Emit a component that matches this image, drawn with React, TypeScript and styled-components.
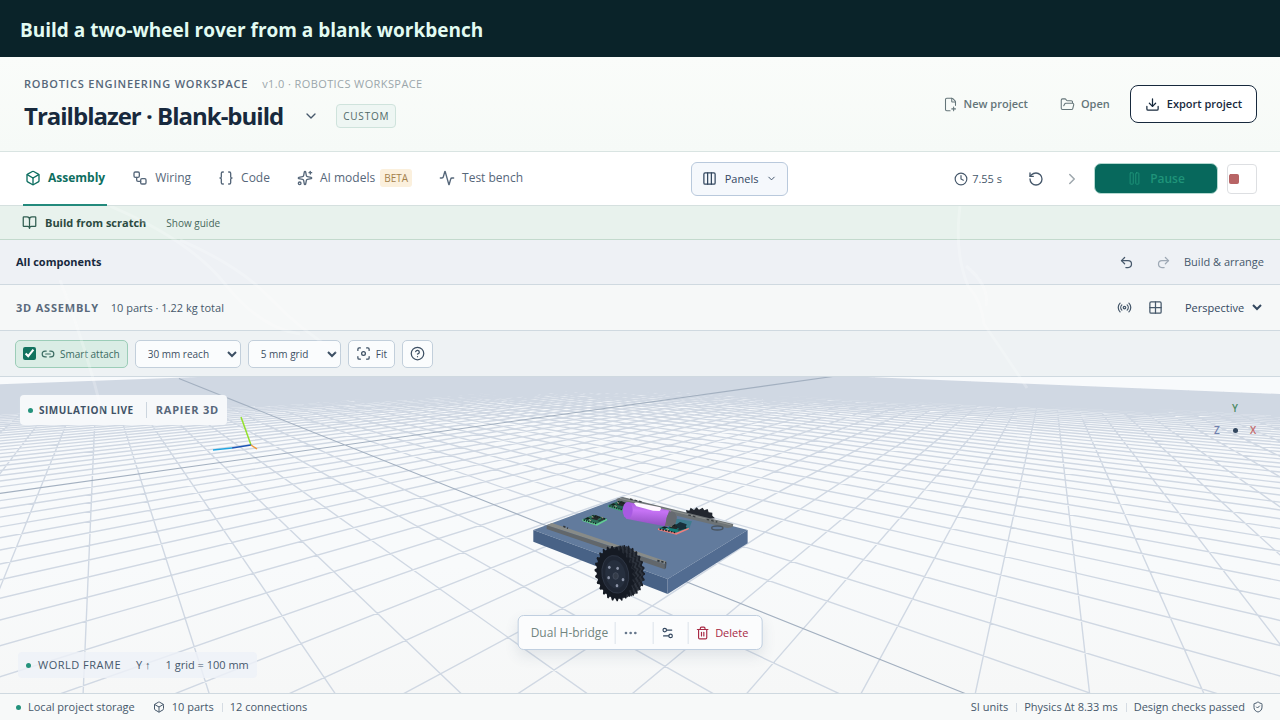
import React from "react";
import styled, { createGlobalStyle, css } from "styled-components";
import {
  Activity, BookOpen, Box, Braces, ChevronDown, ChevronRight, Clock, Columns3, Download,
  Ellipsis, FilePlus2, Focus, FolderOpen, Grid2x2, HelpCircle, Link2, Pause, Radio, Redo2,
  RotateCcw, Settings2, ShieldCheck, Sparkles, Square, Trash2, Undo2, Workflow,
} from "lucide-react";

const GlobalStyle = createGlobalStyle`
  *, *::before, *::after { box-sizing: border-box; }
  body { margin: 0; background: #f6f8f8; }
  button, select, input { font: inherit; color: inherit; }
  button { cursor: pointer; }
`;

const Page = styled.div`
  min-height: 100vh;
  display: flex;
  flex-direction: column;
  font-family: "Open Sans", "Noto Sans", sans-serif;
  font-size: 11px;
  line-height: 16px;
  color: #46586b;
  white-space: nowrap;
`;

const Banner = styled.div`
  padding: 18px 20px 15px;
  background: #0a2329;
  color: #e2fbf2;
  font-size: 19px;
  line-height: 24px;
  font-weight: 700;
`;

const Header = styled.header`
  display: flex;
  align-items: center;
  justify-content: space-between;
  height: 95px;
  padding: 0 23px 0 24px;
  background: linear-gradient(#fafcfa, #f6faf7);
  border-bottom: 1px solid #d9e4e2;
`;

const TitleBlock = styled.div`
  display: flex;
  flex-direction: column;
  gap: 8px;
`;

const Eyebrow = styled.div`
  display: flex;
  gap: 14px;
  line-height: 16px;
  letter-spacing: 0.8px;
  font-weight: 600;
  color: #56677a;
`;

const Version = styled.span`
  font-weight: 400;
  letter-spacing: 0.4px;
  color: #9ba6ab;
`;

const TitleRow = styled.div`
  display: flex;
  align-items: center;
`;

const Title = styled.h1`
  margin: 0;
  font-size: 24px;
  line-height: 32px;
  font-weight: 700;
  letter-spacing: -1px;
  color: #17293d;
`;

const PlainButton = styled.button<{ $pad?: number; $tone?: string }>`
  display: inline-flex;
  align-items: center;
  gap: 6px;
  padding: 4px ${(p) => p.$pad ?? 4}px;
  border: 0;
  background: none;
  color: ${(p) => p.$tone ?? "inherit"};
`;

const ProjectMenu = styled(PlainButton)`
  margin: 0 13px 0 16px;
`;

const Tag = styled.span`
  padding: 3px 6px;
  border: 1px solid #cfe3dc;
  border-radius: 4px;
  background: #eef6f3;
  font-size: 10px;
  letter-spacing: 0.8px;
  font-weight: 500;
  color: #506a68;
`;

const Actions = styled.div`
  display: flex;
  align-items: center;
  gap: 8px;
  font-weight: 600;
`;

const ExportButton = styled.button`
  display: inline-flex;
  align-items: center;
  gap: 7px;
  height: 38px;
  margin-left: 0;
  padding: 0 14px;
  border: 1px solid #17293d;
  border-radius: 8px;
  background: #fff;
  color: #17293d;
  font-weight: 600;
`;

const TabBar = styled.div`
  display: flex;
  align-items: center;
  justify-content: space-between;
  height: 54px;
  padding: 0 23px;
  background: #fff;
  border-bottom: 1px solid #d5e0df;
`;

const Tabs = styled.nav`
  display: flex;
  gap: 23px;
  height: 54px;
`;

const Tab = styled.a<{ $active?: boolean }>`
  display: flex;
  align-items: center;
  gap: 7px;
  padding: 0 2px;
  font-size: 12px;
  text-decoration: none;
  color: #56677a;
  border-bottom: 2px solid transparent;
  ${(p) => p.$active && css`
    color: #0d6e60;
    font-weight: 700;
    border-bottom-color: #238a7c;
  `}
`;

const Beta = styled.span`
  padding: 1px 4px;
  margin-left: -2px;
  border-radius: 3px;
  background: #fbf0dd;
  color: #a3814b;
  font-size: 10px;
`;

const PanelsButton = styled.button`
  display: inline-flex;
  align-items: center;
  gap: 8px;
  height: 34px;
  padding: 0 10px;
  border: 1px solid #b9c9dc;
  border-radius: 6px;
  background: #f5f8fc;
  color: #33475f;
`;

const Transport = styled.div`
  display: flex;
  align-items: center;
`;

const Elapsed = styled.span`
  display: inline-flex;
  align-items: center;
  gap: 4px;
  margin-right: 20px;
`;

const PauseButton = styled.button`
  display: inline-flex;
  align-items: center;
  justify-content: center;
  gap: 8px;
  width: 124px;
  height: 31px;
  margin: 0 9px 0 0;
  border: 1px solid #b5d9d1;
  border-radius: 7px;
  background: #07685c;
  color: #1f9479;
  font-size: 12px;
  font-weight: 600;
`;

const StopButton = styled.button`
  display: flex;
  align-items: center;
  width: 30px;
  height: 30px;
  padding: 0;
  border: 1px solid #dddfe2;
  border-radius: 4px;
  background: #fff;
  color: #b86465;
`;

const Workspace = styled.main`
  position: relative;
  flex: 1;
  display: flex;
  flex-direction: column;
`;

const Sheen = styled.svg`
  position: absolute;
  top: 0;
  left: 0;
  width: 100%;
  height: 220px;
  pointer-events: none;
`;

const Strip = styled.div<{ $bg: string; $line: string; $height: number; $pad?: string }>`
  display: flex;
  align-items: center;
  height: ${(p) => p.$height}px;
  padding: ${(p) => p.$pad ?? "0 16px"};
  background: ${(p) => p.$bg};
  border-bottom: 1px solid ${(p) => p.$line};
`;

const Push = styled.div`
  flex: 1;
`;

const GuideTitle = styled.strong`
  margin: 0 16px 0 8px;
  font-weight: 700;
  color: #2b4a41;
`;

const GuideButton = styled(PlainButton)`
  font-size: 10px;
  font-weight: 500;
  color: #47685c;
`;

const PanelTitle = styled.h2`
  margin: 0;
  font-size: 11px;
  font-weight: 700;
  color: #17293d;
`;

const Caps = styled.strong`
  font-weight: 700;
  letter-spacing: 0.8px;
  color: #5a6a7c;
`;

const Meta = styled.span`
  margin-left: 12px;
`;

const ModeLabel = styled.span`
  margin-left: 2px;
`;

const ViewSelect = styled.select`
  width: 84px;
  margin: 0 -1px 0 10px;
  border: 0;
  background: transparent;
  color: #33475f;
`;

const Tools = styled(Strip)`
  gap: 7px;
  font-size: 10px;
`;

const Toggle = styled.label`
  display: inline-flex;
  align-items: center;
  gap: 5px;
  height: 28px;
  padding: 0 7px;
  border: 1px solid #9ccdb8;
  border-radius: 5px;
  background: #daede5;
  color: #3b6b62;

  input {
    width: 13px;
    height: 13px;
    margin: 0;
    accent-color: #12735f;
  }
`;

const ToolSelect = styled.select<{ $width: number }>`
  width: ${(p) => p.$width}px;
  height: 28px;
  padding: 0 0 0 8px;
  border: 1px solid #c2cfdb;
  border-radius: 5px;
  background: #fafcfd;
  color: #3c4f63;
`;

const ToolButton = styled.button`
  display: inline-flex;
  align-items: center;
  justify-content: center;
  gap: 5px;
  height: 28px;
  padding: 0 7px;
  border: 1px solid #c2cfdb;
  border-radius: 5px;
  background: #fafcfd;
  color: #3c4f63;
`;

const Viewport = styled.section`
  position: relative;
  flex: 1;
  min-height: 316px;
  overflow: hidden;
  background: linear-gradient(#f8fafc, #f8fafb 60%, #f6f7f7);
`;

const Scene = styled.svg`
  position: absolute;
  inset: 0;
  width: 100%;
  height: 100%;
`;

const SimChip = styled.div`
  position: absolute;
  top: 18px;
  left: 20px;
  display: flex;
  align-items: center;
  gap: 6px;
  height: 30px;
  padding: 0 8px;
  border-radius: 4px;
  background: #f6f8fa;
  box-shadow: 0 0 2px #d5dde6;
  font-size: 10px;
  font-weight: 700;
  letter-spacing: 0.5px;
  color: #3f5266;
`;

const Engine = styled.span`
  margin-left: 6px;
  padding-left: 9px;
  border-left: 1px solid #ccd5de;
  font-size: 11px;
  letter-spacing: 0.8px;
  color: #56677a;
`;

const Dot = styled.i`
  width: 5px;
  height: 5px;
  border-radius: 50%;
  background: #23927c;
`;

const FrameChip = styled.div`
  position: absolute;
  left: 18px;
  bottom: 15px;
  display: flex;
  align-items: center;
  gap: 15px;
  height: 26px;
  padding: 0 8px;
  border-radius: 4px;
  background: rgba(238, 241, 247, 0.8);
`;

const FrameName = styled.span`
  display: inline-flex;
  align-items: center;
  gap: 7px;
  letter-spacing: 0.5px;
`;

const Compass = styled.div`
  position: absolute;
  top: 20px;
  right: 18px;
  display: grid;
  grid-template-columns: repeat(3, 18px);
  grid-template-rows: 22px 22px;
  place-items: center;
  font-size: 10px;
  font-weight: 600;
`;

const AxisLabel = styled.span<{ $tone: string; $col: number }>`
  grid-column: ${(p) => p.$col};
  color: ${(p) => p.$tone};
`;

const Hub = styled(Dot)`
  background: #33475f;
`;

const PartBar = styled.div`
  position: absolute;
  left: 50%;
  bottom: 43px;
  transform: translateX(-50%);
  display: flex;
  align-items: center;
  height: 35px;
  padding: 0 6px 0 12px;
  border: 1px solid #c0cfe0;
  border-radius: 6px;
  background: #fbfcfd;
  box-shadow: 0 6px 14px rgba(60, 80, 110, 0.12);
`;

const PartName = styled.span`
  padding-right: 7px;
  font-size: 12px;
  color: #71857f;
`;

const PartAction = styled.button<{ $tone?: string; $end?: number }>`
  display: inline-flex;
  align-items: center;
  gap: 5px;
  height: 22px;
  padding: 0 ${(p) => p.$end ?? 7}px 0 7px;
  border: 0;
  border-left: 1px solid #dbe2ea;
  background: none;
  color: ${(p) => p.$tone ?? "#33475f"};
`;

const StatusBar = styled.footer`
  display: flex;
  align-items: center;
  height: 27px;
  padding: 0 16px;
  background: #f7f9f9;
  border-top: 1px solid #cfd9e0;
`;

const StatusItem = styled.span<{ $divided?: boolean }>`
  display: inline-flex;
  align-items: center;
  gap: 7px;
  ${(p) => p.$divided && css`
    margin-left: 8px;
    padding-left: 8px;
    background: linear-gradient(#d5dce3, #d5dce3) left center / 1px 9px no-repeat;
  `}
`;

const PartCount = styled(StatusItem)`
  margin-left: 18px;
`;

/* Ground plane: a 120 x 120 cell grid projected with two vanishing points. */
const ORIGIN = { x: 345, y: 68 };
const VANISH_A = { x: 98, y: -31 };
const VANISH_B = { x: 1050, y: -31 };
const STEP_A = 0.0342;
const STEP_B = 0.0377;
const HALF = 60;
const NEAR = 0.16;

function project(a: number, b: number) {
  const u = a * STEP_A;
  const v = b * STEP_B;
  const w = 1 + u + v;
  const x = (ORIGIN.x + u * VANISH_A.x + v * VANISH_B.x) / w;
  const y = (ORIGIN.y + u * VANISH_A.y + v * VANISH_B.y) / w;
  return `${x.toFixed(1)} ${y.toFixed(1)}`;
}

function lineA(b: number) {
  const start = Math.max(-HALF, (NEAR - 1 - b * STEP_B) / STEP_A);
  return start < HALF ? `M${project(start, b)}L${project(HALF, b)}` : "";
}

function lineB(a: number) {
  const start = Math.max(-HALF, (NEAR - 1 - a * STEP_A) / STEP_B);
  return start < HALF ? `M${project(a, start)}L${project(a, HALF)}` : "";
}

const steps = Array.from({ length: HALF * 2 + 1 }, (_, i) => i - HALF);
const gridPath = steps.filter((n) => n !== 0).map((n) => lineA(n) + lineB(n)).join("");
const axisPath = lineA(0) + lineB(0);

function gear(cx: number, cy: number, rx: number, ry: number, tilt: number, teeth: number) {
  const points: string[] = [];
  const c = Math.cos(tilt);
  const s = Math.sin(tilt);
  for (let i = 0; i < teeth * 4; i += 1) {
    const angle = (i / (teeth * 4)) * Math.PI * 2;
    const k = i % 4 < 2 ? 1 : 0.9;
    const x = Math.cos(angle) * rx * k;
    const y = Math.sin(angle) * ry * k;
    points.push(`${(cx + x * c - y * s).toFixed(1)},${(cy + x * s + y * c).toFixed(1)}`);
  }
  return points.join(" ");
}

function Wheel() {
  const layers = [36, 30, 24, 18, 12, 6];
  return (
    <g>
      {layers.map((d, i) => (
        <polygon key={d} points={gear(284 + d, 281 - d / 4, 54, 78, -0.2, 26)} fill={i % 2 ? "#2d333d" : "#1b2029"} />
      ))}
      <polygon points={gear(284, 281, 59, 84, -0.2, 26)} fill="#151a23" />
      <ellipse cx="286" cy="283" rx="40" ry="57" transform="rotate(-10 286 283)" fill="#1f2633" stroke="#343d4c" strokeWidth="2" />
      <ellipse cx="286" cy="283" rx="30" ry="43" transform="rotate(-10 286 283)" fill="#262f3e" />
      <ellipse cx="287" cy="288" rx="8" ry="10" fill="#343c49" stroke="#4b5565" strokeWidth="2" />
      {[[268, 262], [293, 265], [266, 293], [309, 299], [291, 317]].map(([x, y]) => (
        <ellipse key={`${x}-${y}`} cx={x} cy={y} rx="4" ry="5" fill="#8b93a6" />
      ))}
    </g>
  );
}

function Board({ x, y, edge, base, size = 1 }: { x: number; y: number; edge: string; base: string; size?: number }) {
  return (
    <g transform={`translate(${x} ${y}) scale(${size} 1)`}>
      <polygon points="0,14 34,0 74,12 44,27" fill={base} />
      <polygon points="0,14 44,27 74,12 74,17 44,33 0,19" fill={edge} />
      <polygon points="8,12 16,8 24,11 16,15" fill="#16211f" />
      <polygon points="26,12 40,1 54,7 44,17" fill="#252a2b" />
      <polygon points="46,18 64,10 68,13 50,21" fill="#2c3a35" />
      <path d="M4 16L42 27M30 3L70 13" stroke="#141f1d" strokeWidth="4" strokeDasharray="4 3" />
      <path d="M28 5l5 3M20 15l6 3M58 8l4 2" stroke="#bfa98a" strokeWidth="3" />
    </g>
  );
}

function Rover() {
  return (
    <g transform="translate(520 103) scale(0.3333)">
      <polygon points="40,150 305,52 683,150 443,297" fill="#627b9d" />
      <polygon points="40,150 443,297 443,342 40,185" fill="#486286" />
      <polygon points="443,297 683,150 683,190 443,342" fill="#526c91" />
      <polygon points="491,104 500,98 498,90 508,92 512,83 522,90 530,82 537,89 548,83 553,91 563,87 566,97 577,98 577,107 585,115 545,120" fill="#22272f" />
      <polygon points="290,56 308,51 640,132 638,141 622,144 290,64" fill="#6d7376" />
      <path d="M300 55L634 135" stroke="#8b8f8e" strokeWidth="3" />
      <path d="M330 57l40 10M505 105l26 7M560 118l32 8" stroke="#3c4245" strokeWidth="4" strokeDasharray="8 6" />
      <ellipse cx="592" cy="144" rx="17" ry="6" fill="none" stroke="#4a5560" strokeWidth="4" />
      <Board x={264} y={62} edge="#3fa377" base="#246352" />
      <Board x={187} y={104} edge="#62cf93" base="#2c7059" />
      <polygon points="452,124 470,116 516,124 506,150 470,150" fill="#3f7d8f" />
      <Board x={414} y={131} edge="#ee7f7d" base="#147f7b" size={1.25} />
      <polygon points="466,136 480,126 500,133 496,146 480,150" fill="#17303a" />
      <polygon points="324,66 452,92 446,141 318,116" fill="url(#cell)" />
      <ellipse cx="323" cy="91" rx="15" ry="25" fill="#a85ae2" />
      <polygon points="447,93 462,98 471,110 466,131 451,139 434,138" fill="#6f6a72" />
      <ellipse cx="454" cy="117" rx="15" ry="22" fill="#666a70" transform="rotate(12 454 117)" />
      <path d="M342 70Q346 66 352 68L421 82Q426 87 419 93L399 92L349 79Z" fill="#fff8ff" />
      <polygon points="80,136 96,129 438,244 436,252" fill="#888b88" />
      <polygon points="80,136 434,252 434,268 80,147" fill="#62676b" />
      <polygon points="434,252 440,246 438,264 434,268" fill="#4c5156" />
      <path d="M130 139l14 6M412 242l26 6" stroke="#2f353a" strokeWidth="5" strokeDasharray="7 5" />
      <Wheel />
    </g>
  );
}

export default function App() {
  return (
    <Page>
      <GlobalStyle />
      <Banner>Build a two-wheel rover from a blank workbench</Banner>

      <Header>
        <TitleBlock>
          <Eyebrow>
            ROBOTICS ENGINEERING WORKSPACE
            <Version>v1.0 · ROBOTICS WORKSPACE</Version>
          </Eyebrow>
          <TitleRow>
            <Title>Trailblazer · Blank-build</Title>
            <ProjectMenu aria-label="Switch project"><ChevronDown size={16} /></ProjectMenu>
            <Tag>CUSTOM</Tag>
          </TitleRow>
        </TitleBlock>
        <Actions>
          <PlainButton $pad={12} $tone="#647579"><FilePlus2 size={15} strokeWidth={1.7} />New project</PlainButton>
          <PlainButton $pad={12} $tone="#647579"><FolderOpen size={15} strokeWidth={1.7} />Open</PlainButton>
          <ExportButton><Download size={15} />Export project</ExportButton>
        </Actions>
      </Header>

      <TabBar>
        <Tabs>
          <Tab href="#assembly" $active><Box size={16} />Assembly</Tab>
          <Tab href="#wiring"><Workflow size={16} />Wiring</Tab>
          <Tab href="#code"><Braces size={16} />Code</Tab>
          <Tab href="#models"><Sparkles size={16} />AI models <Beta>BETA</Beta></Tab>
          <Tab href="#bench"><Activity size={16} />Test bench</Tab>
        </Tabs>
        <PanelsButton><Columns3 size={15} />Panels<ChevronDown size={11} /></PanelsButton>
        <Transport>
          <Elapsed><Clock size={14} />7.55 s</Elapsed>
          <PlainButton aria-label="Reset" $pad={6}><RotateCcw size={16} /></PlainButton>
          <PlainButton aria-label="Step" $pad={13} $tone="#9ea7ad"><ChevronRight size={18} /></PlainButton>
          <PauseButton><Pause size={15} strokeWidth={1.5} />Pause</PauseButton>
          <StopButton aria-label="Stop"><Square size={12} fill="currentColor" /></StopButton>
        </Transport>
      </TabBar>

      <Workspace>
        <Strip $bg="#e8f2ed" $line="#c3dacd" $height={34} $pad="0 22px">
          <BookOpen size={15} color="#2f5d50" />
          <GuideTitle>Build from scratch</GuideTitle>
          <GuideButton>Show guide</GuideButton>
        </Strip>
        <Strip $bg="#eef1f5" $line="#cfd9e0" $height={45}>
          <PanelTitle>All components</PanelTitle>
          <Push />
          <PlainButton aria-label="Undo" $pad={11}><Undo2 size={15} /></PlainButton>
          <PlainButton aria-label="Redo" $pad={11} $tone="#9ea9b5"><Redo2 size={15} /></PlainButton>
          <ModeLabel>Build &amp; arrange</ModeLabel>
        </Strip>
        <Strip $bg="#f6f8f8" $line="#cfd9e0" $height={46}>
          <Caps>3D ASSEMBLY</Caps>
          <Meta>10 parts · 1.22 kg total</Meta>
          <Push />
          <PlainButton aria-label="Broadcast" $pad={8}><Radio size={15} /></PlainButton>
          <PlainButton aria-label="Split view" $pad={8}><Grid2x2 size={15} /></PlainButton>
          <ViewSelect aria-label="Camera"><option>Perspective</option></ViewSelect>
        </Strip>
        <Tools $bg="#eef2f4" $line="#cfd9e0" $height={46} $pad="0 15px">
          <Toggle><input type="checkbox" defaultChecked /><Link2 size={14} />Smart attach</Toggle>
          <ToolSelect aria-label="Reach" $width={106}><option>30 mm reach</option></ToolSelect>
          <ToolSelect aria-label="Grid size" $width={93}><option>5 mm grid</option></ToolSelect>
          <ToolButton><Focus size={15} />Fit</ToolButton>
          <ToolButton aria-label="Help"><HelpCircle size={15} /></ToolButton>
        </Tools>

        <Viewport>
          <Scene viewBox="0 0 1280 316" preserveAspectRatio="xMidYMid slice" aria-label="Rover on the ground grid">
            <defs>
              <linearGradient id="cell" x1="0.45" y1="0" x2="0.35" y2="1">
                <stop offset="0" stopColor="#a65bd9" />
                <stop offset="0.35" stopColor="#c673f5" />
                <stop offset="1" stopColor="#8b4cba" />
              </linearGradient>
            </defs>
            <path d={gridPath} stroke="#d0d8e3" strokeWidth="1.4" fill="none" />
            <path d={axisPath} stroke="#a3b0c0" strokeWidth="1.1" fill="none" />
            <path d="M251 68L241 40" stroke="#93e02c" strokeWidth="1.5" />
            <path d="M251 68L232 71" stroke="#1c55b5" strokeWidth="1.5" />
            <path d="M232 71L213 73" stroke="#21a5e0" strokeWidth="1.5" />
            <path d="M251 68L257 72" stroke="#f09a3e" strokeWidth="1.5" />
            <Rover />
          </Scene>
          <SimChip><Dot />SIMULATION LIVE<Engine>RAPIER 3D</Engine></SimChip>
          <Compass>
            <AxisLabel $col={2} $tone="#4d8a63">Y</AxisLabel>
            <AxisLabel $col={1} $tone="#7080ad">Z</AxisLabel>
            <Hub />
            <AxisLabel $col={3} $tone="#c46a6c">X</AxisLabel>
          </Compass>
          <FrameChip>
            <FrameName><Dot />WORLD FRAME</FrameName>
            <span>Y ↑</span>
            <span>1 grid = 100 mm</span>
          </FrameChip>
          <PartBar>
            <PartName>Dual H-bridge</PartName>
            <PartAction aria-label="More" $end={14}><Ellipsis size={16} color="#66778c" /></PartAction>
            <PartAction aria-label="Adjust" $end={13}><Settings2 size={14} /></PartAction>
            <PartAction $tone="#a82a45"><Trash2 size={14} />Delete</PartAction>
          </PartBar>
        </Viewport>

        <Sheen viewBox="0 0 1280 220" preserveAspectRatio="none" aria-hidden="true">
          <g fill="none" stroke="#fff" strokeOpacity="0.22" strokeWidth="3">
            <path d="M110 0Q190 34 225 78T300 128" />
            <path d="M180 34Q240 60 270 92T340 148" />
            <path d="M60 74Q86 140 104 214" />
            <path d="M960 0Q954 46 968 80Q982 96 984 118Q1006 150 1027 182" />
            <path d="M966 60Q990 80 986 100" />
          </g>
        </Sheen>
      </Workspace>

      <StatusBar>
        <StatusItem><Dot />Local project storage</StatusItem>
        <PartCount><Box size={12} />10 parts</PartCount>
        <StatusItem $divided>12 connections</StatusItem>
        <Push />
        <StatusItem>SI units</StatusItem>
        <StatusItem $divided>Physics Δt 8.33 ms</StatusItem>
        <StatusItem $divided>Design checks passed<ShieldCheck size={12} /></StatusItem>
      </StatusBar>
    </Page>
  );
}
